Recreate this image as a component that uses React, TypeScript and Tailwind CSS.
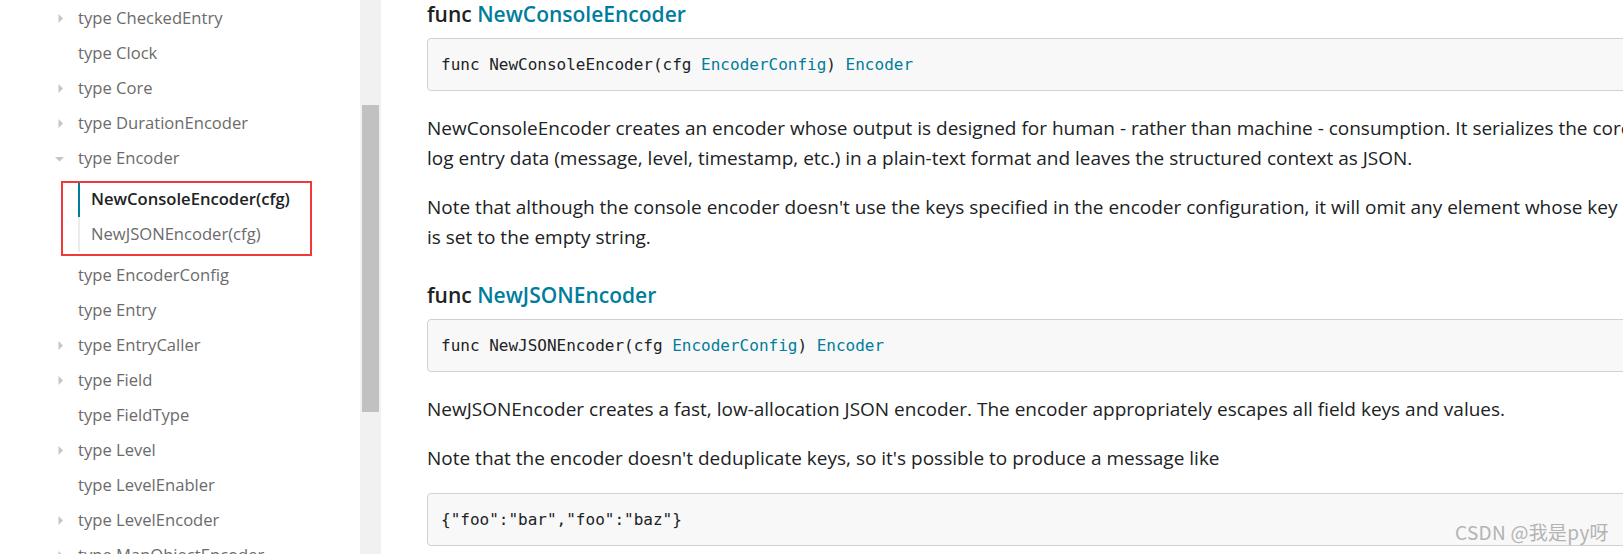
import React from 'react';

type NavItem = {
  label: string;
  arrow?: 'right' | 'down';
};

const topItems: NavItem[] = [
  { label: 'type CheckedEntry', arrow: 'right' },
  { label: 'type Clock' },
  { label: 'type Core', arrow: 'right' },
  { label: 'type DurationEncoder', arrow: 'right' },
  { label: 'type Encoder', arrow: 'down' },
];

const bottomItems: NavItem[] = [
  { label: 'type EncoderConfig' },
  { label: 'type Entry' },
  { label: 'type EntryCaller', arrow: 'right' },
  { label: 'type Field', arrow: 'right' },
  { label: 'type FieldType' },
  { label: 'type Level', arrow: 'right' },
  { label: 'type LevelEnabler' },
  { label: 'type LevelEncoder', arrow: 'right' },
  { label: 'type MapObjectEncoder', arrow: 'right' },
];

function Arrow({ dir }: { dir?: 'right' | 'down' }) {
  return (
    <span className="flex w-[9px] h-[9px] shrink-0">
      {dir === 'right' && (
        <svg width="9" height="9" viewBox="0 0 9 9">
          <path d="M3.5 0 L8 4.5 L3.5 9 Z" fill="#c6c6c6" />
        </svg>
      )}
      {dir === 'down' && (
        <svg width="9" height="9" viewBox="0 0 9 9">
          <path d="M0 3 L9 3 L4.5 7.5 Z" fill="#c6c6c6" />
        </svg>
      )}
    </span>
  );
}

function NavRow({ item }: { item: NavItem }) {
  return (
    <li className="flex h-[35px] items-center">
      <Arrow dir={item.arrow} />
      <span className="ml-[14px] whitespace-nowrap text-[#6b6b6b]">{item.label}</span>
    </li>
  );
}

function CodeBox({ children }: { children: React.ReactNode }) {
  return (
    <div className="flex h-[53px] w-[1300px] items-center rounded-[4px] border border-[#d1d1d1] bg-[#f8f8f8] pl-[13px] font-['DejaVu_Sans_Mono',monospace] text-[16px] whitespace-pre text-[#202224]">
      {children}
    </div>
  );
}

function Link({ children }: { children: React.ReactNode }) {
  return <span className="text-[#007d9c]">{children}</span>;
}

export default function App() {
  return (
    <div className="relative flex h-[554px] w-[1623px] overflow-hidden bg-white font-['Open_Sans',sans-serif]">
      {/* Sidebar */}
      <aside className="flex w-[381px] shrink-0">
        <nav className="w-[360px] pt-px pl-[55px] text-[16.6px]">
          <ul>
            {topItems.map((item) => (
              <NavRow key={item.label} item={item} />
            ))}
          </ul>
          <ul className="my-[6px] ml-[23px]">
            <li className="flex h-[35px] items-center border-l-2 border-[#007d9c] pl-[11px] font-semibold text-[#202224]">
              NewConsoleEncoder(cfg)
            </li>
            <li className="flex h-[35px] items-center border-l-2 border-[#ececec] pl-[11px] text-[#6b6b6b]">
              NewJSONEncoder(cfg)
            </li>
          </ul>
          <ul>
            {bottomItems.map((item) => (
              <NavRow key={item.label} item={item} />
            ))}
          </ul>
        </nav>
        <div className="w-[21px] bg-[#f1f1f1] px-[2px] pt-[105px]">
          <div className="h-[307px] bg-[#c1c1c1]" />
        </div>
      </aside>

      {/* Main content */}
      <main className="w-[1300px] shrink-0 pl-[46px] text-[19px] text-[#202224]">
        <h3 className="text-[21px] leading-[29px] font-semibold">
          func <Link>NewConsoleEncoder</Link>
        </h3>
        <div className="mt-[9px]">
          <CodeBox>
            func NewConsoleEncoder(cfg <Link>EncoderConfig</Link>) <Link>Encoder</Link>
          </CodeBox>
        </div>
        <p className="mt-[22px] leading-[30px] whitespace-nowrap">
          NewConsoleEncoder creates an encoder whose output is designed for human - rather than machine - consumption. It serializes the core
          <br />
          log entry data (message, level, timestamp, etc.) in a plain-text format and leaves the structured context as JSON.
        </p>
        <p className="mt-[19px] leading-[30px] whitespace-nowrap">
          Note that although the console encoder doesn't use the keys specified in the encoder configuration, it will omit any element whose key
          <br />
          is set to the empty string.
        </p>

        <h3 className="mt-[29px] text-[21px] leading-[29px] font-semibold">
          func <Link>NewJSONEncoder</Link>
        </h3>
        <div className="mt-[9px]">
          <CodeBox>
            func NewJSONEncoder(cfg <Link>EncoderConfig</Link>) <Link>Encoder</Link>
          </CodeBox>
        </div>
        <p className="mt-[22px] leading-[30px] whitespace-nowrap">
          NewJSONEncoder creates a fast, low-allocation JSON encoder. The encoder appropriately escapes all field keys and values.
        </p>
        <p className="mt-[19px] leading-[30px] whitespace-nowrap">
          Note that the encoder doesn't deduplicate keys, so it's possible to produce a message like
        </p>
        <div className="mt-[20px]">
          <CodeBox>{'{"foo":"bar","foo":"baz"}'}</CodeBox>
        </div>
      </main>

      {/* annotation box */}
      <div className="absolute left-[61px] top-[181px] h-[75px] w-[251px] border-2 border-[#f03a3a]" />

      {/* watermark */}
      <div className="absolute left-[1455px] top-[520px] text-[19px] leading-[24px] tracking-[0.3px] whitespace-nowrap text-[#b3b3b3] font-['Noto_Sans_CJK_SC',sans-serif]">
        CSDN @我是py呀
      </div>
    </div>
  );
}
